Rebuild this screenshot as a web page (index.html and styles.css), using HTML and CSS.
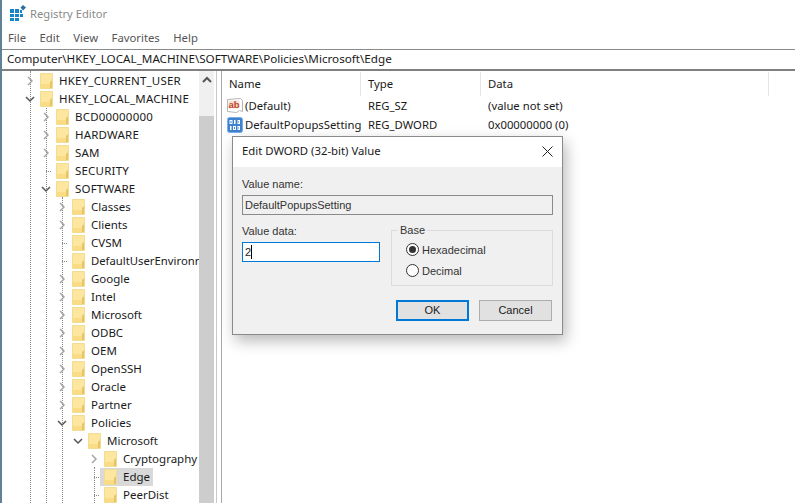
FILE: index.html
```html
<!DOCTYPE html>
<html lang="en">
<head>
<meta charset="utf-8">
<title>Registry Editor</title>
<link rel="stylesheet" href="styles.css">
</head>
<body>
<svg class="defs" width="0" height="0" aria-hidden="true">
  <symbol id="folder" viewBox="0 0 13 18">
    <path d="M.5 1.500h12v15H.5z" fill="#fde6a0" stroke="#f3dc90"/>
    <path d="M10 10l2-2v8h-2z" fill="#e6c468"/>
    <path d="M1 12h9v4H1z" fill="#fbdc84"/>
  </symbol>
  <symbol id="open" viewBox="0 0 10 10"><path d="M1 3l4 4 4-4" fill="none" stroke="#555" stroke-width="1.500"/></symbol>
  <symbol id="closed" viewBox="0 0 10 10"><path d="M3 1l4 4-4 4" fill="none" stroke="#a6a6a6" stroke-width="1.500"/></symbol>
</svg>
<div class="app">
  <header class="titlebar">
    <svg class="appicon" width="17" height="17" viewBox="0 0 17 17">
      <path d="M1 4h4v4H1zM6 4h4v4H6zM11 5h2v3h-2zM1 9h4v3H1zM6 9h4v3H6zM1 13h4v3H1zM6 13h4v3H6zM11 9h3v3h-3z" fill="#1684c9"/>
      <path d="M14 0l3 2.500-3 3-2.500-3z" fill="#2a6f9e"/>
    </svg>
    <span class="apptitle">Registry Editor</span>
  </header>
  <nav class="menu"><span>File</span><span>Edit</span><span>View</span><span>Favorites</span><span>Help</span></nav>
  <div class="address">Computer\HKEY_LOCAL_MACHINE\SOFTWARE\Policies\Microsoft\Edge</div>
  <main class="panes">
    <aside class="tree">
      <i class="guide g0"></i><i class="guide g1"></i><i class="guide g2"></i><i class="guide g3"></i>
      <ul class="rows">
        <li class="row l0"><svg class="chev"><use href="#closed"/></svg><svg class="fold"><use href="#folder"/></svg><span class="caps">HKEY_CURRENT_USER</span></li>
        <li class="row l0"><svg class="chev"><use href="#open"/></svg><svg class="fold"><use href="#folder"/></svg><span class="caps">HKEY_LOCAL_MACHINE</span></li>
        <li class="row l1"><svg class="chev"><use href="#closed"/></svg><svg class="fold"><use href="#folder"/></svg><span class="caps">BCD00000000</span></li>
        <li class="row l1"><svg class="chev"><use href="#closed"/></svg><svg class="fold"><use href="#folder"/></svg><span class="caps">HARDWARE</span></li>
        <li class="row l1"><svg class="chev"><use href="#closed"/></svg><svg class="fold"><use href="#folder"/></svg><span class="caps">SAM</span></li>
        <li class="row l1"><b class="tick"></b><svg class="fold"><use href="#folder"/></svg><span class="caps">SECURITY</span></li>
        <li class="row l1"><svg class="chev"><use href="#open"/></svg><svg class="fold"><use href="#folder"/></svg><span class="caps">SOFTWARE</span></li>
        <li class="row l2"><svg class="chev"><use href="#closed"/></svg><svg class="fold"><use href="#folder"/></svg><span>Classes</span></li>
        <li class="row l2"><svg class="chev"><use href="#closed"/></svg><svg class="fold"><use href="#folder"/></svg><span>Clients</span></li>
        <li class="row l2"><b class="tick"></b><svg class="fold"><use href="#folder"/></svg><span>CVSM</span></li>
        <li class="row l2"><b class="tick"></b><svg class="fold"><use href="#folder"/></svg><span class="tight">DefaultUserEnvironn</span></li>
        <li class="row l2"><svg class="chev"><use href="#closed"/></svg><svg class="fold"><use href="#folder"/></svg><span>Google</span></li>
        <li class="row l2"><svg class="chev"><use href="#closed"/></svg><svg class="fold"><use href="#folder"/></svg><span>Intel</span></li>
        <li class="row l2"><svg class="chev"><use href="#closed"/></svg><svg class="fold"><use href="#folder"/></svg><span>Microsoft</span></li>
        <li class="row l2"><svg class="chev"><use href="#closed"/></svg><svg class="fold"><use href="#folder"/></svg><span>ODBC</span></li>
        <li class="row l2"><svg class="chev"><use href="#closed"/></svg><svg class="fold"><use href="#folder"/></svg><span>OEM</span></li>
        <li class="row l2"><svg class="chev"><use href="#closed"/></svg><svg class="fold"><use href="#folder"/></svg><span>OpenSSH</span></li>
        <li class="row l2"><svg class="chev"><use href="#closed"/></svg><svg class="fold"><use href="#folder"/></svg><span>Oracle</span></li>
        <li class="row l2"><svg class="chev"><use href="#closed"/></svg><svg class="fold"><use href="#folder"/></svg><span>Partner</span></li>
        <li class="row l2"><svg class="chev"><use href="#open"/></svg><svg class="fold"><use href="#folder"/></svg><span>Policies</span></li>
        <li class="row l3"><svg class="chev"><use href="#open"/></svg><svg class="fold"><use href="#folder"/></svg><span>Microsoft</span></li>
        <li class="row l4"><svg class="chev"><use href="#closed"/></svg><svg class="fold"><use href="#folder"/></svg><span>Cryptography</span></li>
        <li class="row l4 selected"><b class="tick"></b><svg class="fold"><use href="#folder"/></svg><span>Edge</span></li>
        <li class="row l4"><b class="tick"></b><svg class="fold"><use href="#folder"/></svg><span>PeerDist</span></li>
      </ul>
    </aside>
    <div class="scrollbar">
      <div class="sb-arrow"><svg width="12" height="12" viewBox="0 0 12 12"><path d="M2 8l4-4 4 4" fill="none" stroke="#555" stroke-width="2"/></svg></div>
      <div class="sb-thumb"></div>
    </div>
    <div class="splitter"></div>
    <section class="list">
      <div class="lhead"><span class="c1">Name</span><span class="c2">Type</span><span class="c3">Data</span></div>
      <div class="lrow">
        <span class="c1 named">
          <svg class="vicon" width="16" height="17" viewBox="0 0 16 17"><path d="M.5 2.500l13-1 2 2v11l-3-1-3 2-9-1z" fill="#fff" stroke="#b5b5b5"/><path d="M1.500 3.500h11v8h-11z" fill="#f6e3dc"/><text x="1.500" y="11" class="abtext">ab</text></svg>
          <span>(Default)</span>
        </span><span class="c2">REG_SZ</span><span class="c3">(value not set)</span>
      </div>
      <div class="lrow">
        <span class="c1 named">
          <svg class="vicon" width="16" height="16" viewBox="0 0 16 16"><rect x=".5" y=".5" width="15" height="15" rx="2" fill="#3f82d0" stroke="#7aaee6"/><path d="M2.500 3h3v4h-3zM7 3h1.500v4H7zM10.500 3H13v4h-2.500zM3 9h1.500v4H3zM6 9h3v4H6zM10.500 9H13v4h-2.500z" fill="#fff"/><path d="M3.500 4h1v2h-1zM11.500 4h.5v2h-.5zM7 10h1v2H7zM11.500 10h.5v2h-.5z" fill="#3f82d0"/></svg>
          <span>DefaultPopupsSetting</span>
        </span><span class="c2">REG_DWORD</span><span class="c3">0x00000000 (0)</span>
      </div>
    </section>
  </main>
  <div class="dialog">
    <div class="dtitle">
      <span>Edit DWORD (32-bit) Value</span>
      <svg width="11" height="11" viewBox="0 0 11 11"><path d="M.5.500l10 10M10.500.500l-10 10" stroke="#222" fill="none"/></svg>
    </div>
    <div class="dbody">
      <div class="lab">Value name:</div>
      <div class="ro">DefaultPopupsSetting</div>
      <div class="two">
        <div class="datacol">
          <div class="lab">Value data:</div>
          <div class="input"><span>2</span><i class="caret"></i></div>
        </div>
        <fieldset class="base">
          <legend>Base</legend>
          <div class="radio"><i class="dot on"></i><span>Hexadecimal</span></div>
          <div class="radio"><i class="dot"></i><span>Decimal</span></div>
        </fieldset>
      </div>
      <div class="buttons"><div class="btn def">OK</div><div class="btn">Cancel</div></div>
    </div>
  </div>
</div>
</body>
</html>
```
FILE: styles.css
```css
* { box-sizing: border-box; }
html, body { margin: 0; height: 100%; }
body { font: 11.5px/16px "Noto Sans", "Liberation Sans", sans-serif; color: #1a1a1a; background: #fff; overflow: hidden; }
.defs { position: absolute; }
.app { position: relative; width: 795px; height: 503px; border-left: 2px solid #5f8296; display: flex; flex-direction: column; overflow: hidden; }
.titlebar { height: 29px; display: flex; align-items: center; padding: 0 0 2px 7px; gap: 4px; }
.apptitle { color: #8a8a8a; font-size: 11.2px; }
.menu { height: 21px; display: flex; align-items: center; padding: 0 0 2px 6px; gap: 13.5px; font-size: 11.3px; color: #555; border-bottom: 1px solid #8a8a8a; }
.address { height: 21px; line-height: 17px; padding-left: 5px; font-size: 11.66px; border-bottom: 2px solid #808080; white-space: nowrap; }
.panes { flex: 1; display: flex; min-height: 0; }
.tree { position: relative; width: 197px; overflow: hidden; padding-top: 1px; }
.rows { list-style: none; margin: 0; padding: 0; }
.row { height: 18px; display: flex; align-items: center; position: relative; white-space: nowrap; }
.caps { letter-spacing: .2px; }
.tight { font-size: 11.3px; }
.l0 { padding-left: 23px; }
.l1 { padding-left: 39px; }
.l2 { padding-left: 55px; }
.l3 { padding-left: 71px; }
.l4 { padding-left: 87px; }
.chev { width: 10px; height: 10px; flex: none; margin-right: 5px; }
.tick { width: 10px; height: 10px; flex: none; margin-right: 5px; position: relative; }
.tick::after { content: ""; position: absolute; left: 5px; top: 5px; width: 5px; border-top: 1px dotted #888; }
.fold { width: 13px; height: 18px; flex: none; margin-right: 6px; }
.selected::before { content: ""; position: absolute; left: 98px; top: 0; width: 53px; height: 18px; background: #d9d9d9; }
.guide { position: absolute; width: 0; border-left: 1px dotted #888; }
.g0 { left: 28px; top: 0; bottom: 0; }
.g1 { left: 44px; top: 34px; bottom: 0; }
.g2 { left: 60px; top: 126px; bottom: 0; }
.g3 { left: 92px; top: 396px; bottom: 0; }
.row > * { position: relative; }
.scrollbar { width: 15px; background: #f0f0f0; display: flex; flex-direction: column; }
.sb-arrow { height: 17px; display: flex; align-items: center; justify-content: center; }
.sb-thumb { flex: 1; background: #cdcdcd; margin-top: 28px; }
.splitter { width: 6px; background: #fff; border-left: 1px solid #c8c8c8; border-right: 1px solid #a9a9a9; margin-left: 2px; }
.list { flex: 1; min-width: 0; font-size: 11.3px; }
.lhead { height: 24px; display: flex; align-items: center; margin-top: 1px; }
.lhead .c1, .lhead .c2, .lhead .c3 { height: 24px; line-height: 24px; border-right: 1px solid #e5e5e5; }
.lhead .c3 { width: 288px; }
.lrow { height: 19px; display: flex; align-items: center; white-space: nowrap; }
.c1 { width: 139px; padding-left: 7px; flex: none; }
.c2 { width: 120px; padding-left: 7px; flex: none; }
.c3 { padding-left: 7px; flex: none; }
.lrow .c1 { padding-left: 5px; }
.named { display: flex; align-items: center; gap: 2px; }
.vicon { flex: none; }
.abtext { font: bold 9.5px "Liberation Sans", sans-serif; fill: #c0441f; }
.dialog { position: absolute; left: 230px; top: 136px; width: 331px; height: 199px; background: #f0f0f0; border: 1px solid #8a8a8a; box-shadow: 3px 6px 14px rgba(0,0,0,.28); }
.dtitle { height: 30px; background: #fff; display: flex; align-items: center; justify-content: space-between; padding: 0 9px 2px; font-size: 11.35px; }
.dbody { padding: 9px 9px 0; display: flex; flex-direction: column; font: 11px/16px "Liberation Sans", sans-serif; }
.lab { height: 16px; line-height: 16px; color: #333; }
.ro { margin-top: 3px; height: 20px; border: 1px solid #8a8a8a; background: #f0f0f0; line-height: 18px; padding-left: 2px; color: #333; }
.two { display: flex; margin-top: 8px; gap: 11px; }
.datacol { width: 138px; }
.input { margin-top: 3px; height: 20px; border: 1px solid #0078d7; background: #fff; line-height: 18px; padding-left: 2px; display: flex; align-items: center; }
.caret { width: 1px; height: 14px; background: #000; }
.base { margin: -1px 0 0; padding: 1px 0 0 14px; width: 162px; height: 64px; border: 1px solid #dcdcdc; }
.base legend { padding: 0 2px; margin-left: -8px; color: #333; }
.radio { height: 21px; display: flex; align-items: center; gap: 3px; color: #333; }
.dot { width: 13px; height: 13px; border-radius: 50%; border: 1px solid #333; background: #fff; position: relative; }
.dot.on::after { content: ""; position: absolute; left: 2px; top: 2px; width: 7px; height: 7px; border-radius: 50%; background: #333; }
.buttons { display: flex; gap: 10px; justify-content: flex-end; margin-top: 14px; padding-right: 1px; }
.btn { width: 73px; height: 21px; background: #e1e1e1; border: 1px solid #adadad; text-align: center; line-height: 19px; }
.btn.def { border: 2px solid #0078d7; line-height: 17px; }
```
